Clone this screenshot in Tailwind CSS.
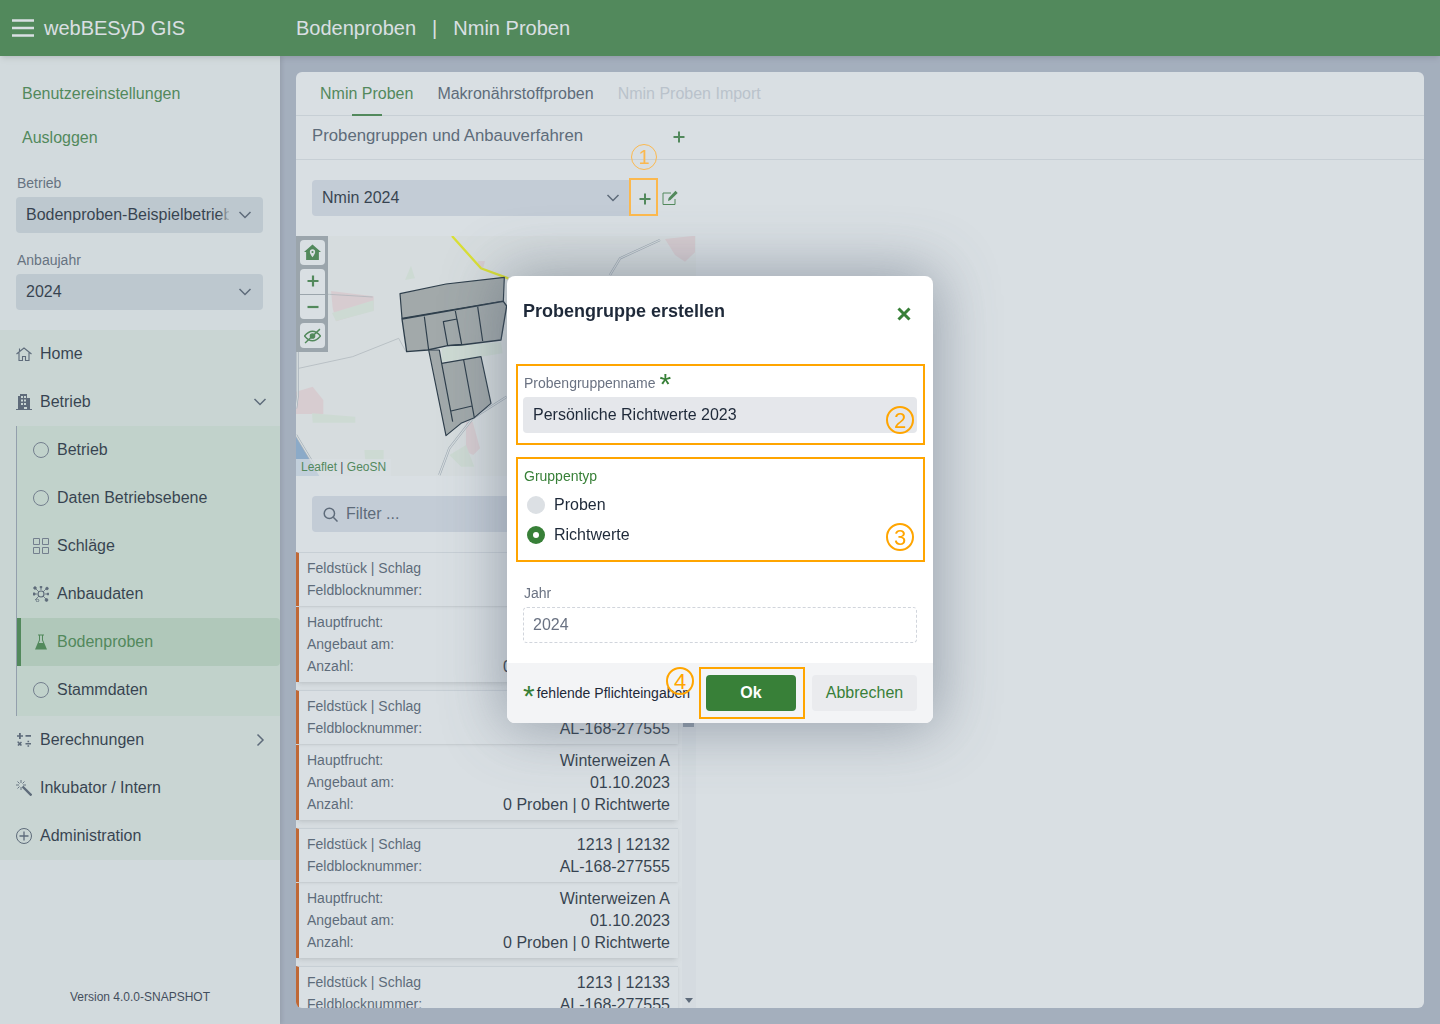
<!DOCTYPE html>
<html lang="de">
<head>
    <meta charset="UTF-8">
    <title>webBESyD GIS</title>
    <script src="https://cdn.jsdelivr.net/npm/@tailwindcss/browser@4"></script>
</head>
<body class="h-[1024px] w-[1440px] overflow-hidden bg-[#b2b8c8] font-['Liberation_Sans',sans-serif] text-gray-900">

    <!-- Kopfzeile -->
    <header class="relative z-[2] flex h-14 items-center bg-[#388038] text-xl text-white shadow-md">
        <div class="flex w-[296px] items-center pl-3">
            <svg class="mr-[10px] h-[22px] w-[22px]" viewBox="0 0 22 22" fill="none" stroke="currentColor" stroke-width="2.6"><path d="M0 3.5h22M0 11h22M0 18.5h22"/></svg>
            <span>webBESyD GIS</span>
        </div>
        <span>Bodenproben</span>
        <span class="mx-4">|</span>
        <span>Nmin Proben</span>
    </header>

    <div class="flex h-[968px]">
        <!-- Seitenleiste -->
        <aside class="relative z-[1] flex w-[280px] shrink-0 flex-col bg-[#f5f8f6] shadow-[2px_0_4px_rgba(0,0,0,0.12)]">
            <div class="px-[22px] pt-4 text-[#388038]">
                <a class="flex h-11 items-center">Benutzereinstellungen</a>
                <a class="flex h-11 items-center">Ausloggen</a>
            </div>
            <div class="px-4 pt-[13px]">
                <label class="block pl-px text-sm leading-[20px] text-[#56606e]">Betrieb</label>
                <div class="relative mt-1 flex h-9 w-[247px] items-center rounded-sm bg-[#d6dde2] pl-[10px]">
                    <span class="w-[203px] overflow-hidden whitespace-nowrap">Bodenproben-Beispielbetrieb</span>
                    <div class="absolute left-[203px] top-0 h-9 w-[12px] bg-gradient-to-r from-transparent to-[#d6dde2]"></div>
                    <svg class="absolute right-[11px] top-[13px] h-[10px] w-[14px] text-gray-600" viewBox="0 0 14 10" fill="none" stroke="currentColor" stroke-width="1.5"><path d="M1.5 2l5.5 5.5L12.5 2"/></svg>
                </div>
                <label class="mt-[17px] block pl-px text-sm leading-[20px] text-[#56606e]">Anbaujahr</label>
                <div class="relative mt-1 flex h-9 w-[247px] items-center rounded-sm bg-[#d6dde2] pl-[10px]">
                    <span>2024</span>
                    <svg class="absolute right-[11px] top-[13px] h-[10px] w-[14px] text-gray-600" viewBox="0 0 14 10" fill="none" stroke="currentColor" stroke-width="1.5"><path d="M1.5 2l5.5 5.5L12.5 2"/></svg>
                </div>
            </div>

            <nav class="mt-5 bg-[#e7f0e8]">
                <a class="flex h-12 items-center pl-4">
                    <svg class="mr-2 h-4 w-4 text-gray-600" viewBox="0 0 16 16" fill="none" stroke="currentColor" stroke-width="1.1"><path d="M.5 8L8 2l7.5 6M3 6.5V14.500h3.500v-4h3v4H13V6.5M3.5 2.5v2.500"/></svg>
                    Home
                </a>
                <a class="flex h-12 items-center pl-4">
                    <svg class="mr-2 h-4 w-4 text-gray-600" viewBox="0 0 16 16" fill="currentColor"><path d="M0 15h16v1H0zM2 2h2V0h7v4h3v11h-3v-2H8v2H2zM5 2v2h2V2zm3 0v2h2V2zM5 5.5v2h2v-2zm3 0v2h2v-2zM5 9v2h2V9zm3 0v2h2V9z" fill-rule="evenodd"/></svg>
                    Betrieb
                    <svg class="ml-auto mr-[13px] h-[10px] w-[14px] text-gray-600" viewBox="0 0 14 10" fill="none" stroke="currentColor" stroke-width="1.5"><path d="M1.5 2l5.5 5.5L12.5 2"/></svg>
                </a>
                <div class="ml-4 border-l border-gray-400 bg-[#dcecdc] pb-[2px]">
                    <a class="flex h-12 items-center pl-4">
                        <span class="mr-2 h-4 w-4 rounded-full border border-gray-500"></span>
                        Betrieb
                    </a>
                    <a class="flex h-12 items-center pl-4">
                        <span class="mr-2 h-4 w-4 rounded-full border border-gray-500"></span>
                        Daten Betriebsebene
                    </a>
                    <a class="flex h-12 items-center pl-4">
                        <svg class="mr-2 h-4 w-4 text-gray-500" viewBox="0 0 16 16" fill="none" stroke="currentColor"><path d="M.5.5h6v6h-6zM9.5.5h6v6h-6zM.5 9.5h6v6h-6zM9.5 9.5h6v6h-6z"/></svg>
                        Schläge
                    </a>
                    <a class="flex h-12 items-center pl-4">
                        <svg class="mr-2 h-4 w-4 text-gray-600" viewBox="0 0 16 16" fill="currentColor" stroke="currentColor" stroke-width=".8"><path d="M2 2l4 4M14 2l-4 4M2 14l4-4M14 14l-4-4M.5 8H4M12 8h3.5M8 .8V4"/><circle cx="8" cy="8" r="3" fill="none" stroke-width="1.2"/><circle cx="2" cy="2" r="1.3"/><circle cx="14" cy="2.5" r="1.3"/><circle cx="1" cy="8" r="1.2"/><circle cx="15" cy="8" r="1"/><circle cx="4.5" cy="14.500" r="1.3" fill="none"/><circle cx="13.5" cy="14" r="1.4"/><circle cx="8" cy="1" r="1"/></svg>
                        Anbaudaten
                    </a>
                    <a class="flex h-12 items-center rounded-r border-l-4 border-[#388038] bg-[#c3ddc3] pl-3 text-[#388038]">
                        <svg class="mr-2 h-4 w-4" viewBox="0 0 16 16" fill="currentColor"><path d="M5 .5h6v1H10v4.500l4 9.500H2l4-9.500V1.500H5zM7 1.500v4.700L5.800 9h4.400L9 6.200V1.500z" fill-rule="evenodd"/></svg>
                        Bodenproben
                    </a>
                    <a class="flex h-12 items-center pl-4">
                        <span class="mr-2 h-4 w-4 rounded-full border border-gray-500"></span>
                        Stammdaten
                    </a>
                </div>
                <a class="flex h-12 items-center pl-4">
                    <svg class="mr-2 h-4 w-4 text-gray-600" viewBox="0 0 16 16" fill="currentColor"><path d="M3 1h1.800v2.200H7v1.600H4.800V7H3V4.800H1V3.200h2zM9.500 3H15v1.800H9.500zM1.500 9.500l1.200 0 1 1.200 1.200-1.200 1.100 1.100-1.200 1.200 1.200 1.200-1.100 1.100-1.200-1.200-1.200 1.200-1.100-1.100 1.200-1.200-1.200-1.200zM9.500 11H15v1.500H9.500zM11.500 8.800h1.600v1.500h-1.600zM11.500 13.200h1.600v1.500h-1.600z"/></svg>
                    Berechnungen
                    <svg class="ml-auto mr-[15px] h-[14px] w-[10px] text-gray-600" viewBox="0 0 10 14" fill="none" stroke="currentColor" stroke-width="1.5"><path d="M2.5 1.5L8 7l-5.500 5.500"/></svg>
                </a>
                <a class="flex h-12 items-center pl-4">
                    <svg class="mr-2 h-4 w-4 text-gray-600" viewBox="0 0 16 16" fill="none" stroke="currentColor"><path d="M6.500 6.500l9 9" stroke-width="2.400"/><path d="M5 0v3M5 7v3M0 5h3M7 5h3M1.500 1.500l2 2M8.500 1.500l-2 2M1.500 8.500l2-2" stroke-width=".9"/></svg>
                    Inkubator / Intern
                </a>
                <a class="flex h-12 items-center pl-4">
                    <svg class="mr-2 h-4 w-4 text-gray-600" viewBox="0 0 16 16" fill="none" stroke="currentColor"><circle cx="8" cy="8" r="7.5"/><path d="M8 3.500v9M3.500 8h9" stroke-width="1.300"/></svg>
                    Administration
                </a>
            </nav>
            <p class="mt-auto pb-[19px] text-center text-xs text-gray-800">Version 4.0.0-SNAPSHOT</p>
        </aside>

        <!-- Inhalt -->
        <main class="min-w-0 flex-1 p-4">
            <div class="flex h-[936px] flex-col overflow-hidden rounded-md bg-white">
                <div class="flex h-11 shrink-0 gap-6 border-b border-gray-200 px-6">
                    <a class="relative leading-[43px] text-[#388038]">Nmin Proben<span class="absolute bottom-[-1px] left-8 h-[2px] w-[30px] bg-[#388038]"></span></a>
                    <a class="leading-[43px] text-gray-600">Makronährstoffproben</a>
                    <a class="leading-[43px] text-gray-300">Nmin Proben Import</a>
                </div>
                <div class="relative h-11 shrink-0 border-b border-gray-200 pl-4 text-[16.75px] leading-[39px] text-gray-600">
                    Probengruppen und Anbauverfahren
                    <svg class="absolute left-[377px] top-[15px] h-3 w-3 text-[#388038]" viewBox="0 0 12 12" stroke="currentColor" stroke-width="2"><path d="M6 .5v11M.5 6h11"/></svg>
                </div>

                <div class="flex min-h-0 w-[400px] flex-1 flex-col">
                    <div class="flex h-[76px] shrink-0 items-start px-4 pt-5">
                        <div class="relative flex h-9 w-[318px] items-center rounded-l-sm bg-[#dfe3ec] pl-[10px]">
                            Nmin 2024
                            <svg class="absolute right-[10px] top-[13px] h-[10px] w-[14px] text-gray-600" viewBox="0 0 14 10" fill="none" stroke="currentColor" stroke-width="1.5"><path d="M1.5 2l5.5 5.5L12.5 2"/></svg>
                        </div>
                        <div class="flex h-9 w-7 items-center justify-center pl-px pt-[2px] text-[#388038]">
                            <svg class="h-3 w-3" viewBox="0 0 12 12" stroke="currentColor" stroke-width="2"><path d="M6 .5v11M.5 6h11"/></svg>
                        </div>
                        <svg class="ml-1 mt-[10px] h-[16px] w-[16px] text-[#388038]" viewBox="0 0 16 16" fill="none" stroke="currentColor"><path d="M13 9v5.500H1V3h8"/><path d="M6 11l.6-3L13.500.8l2.200 2.200L8.500 10z" fill="currentColor" stroke="none"/></svg>
                    </div>

                    <!-- Karte -->
                    <div class="relative h-60 shrink-0 overflow-hidden bg-[#fbfbf8]">
                        <svg class="h-60 w-[400px]" viewBox="0 3 1200 720">
                            <path d="M0 605L70 723H0z" fill="#8db2d8"/>
                            <path d="M105 168l128 16v42l-113 33-10-40z" fill="#fce4e4"/>
                            <path d="M120 258l113-30v-32l-125 38z" fill="#eef8e8"/>
                            <path d="M345 92l12 38-30 5z" fill="#eef8e8"/>
                            <path d="M0 470l50-15 32 40v42l-62 0-20 0z" fill="#fce4e4"/>
                            <path d="M48 535l130 10v18H50z" fill="#eef8e8"/>
                            <path d="M205 645h58v35h-55z" fill="#eef8e8"/>
                            <path d="M510 560l20 0 22 80-20 20-22-10z" fill="#fce4e4"/>
                            <path d="M460 660l50-30 25 65-40 0z" fill="#eef8e8"/>
                            <path d="M437 340l58-10 120-8 5 33-65 10-118 15z" fill="#eef8e8"/>
                            <path d="M1107 12l90-10v50l-30 28-30-20z" fill="#fce4e4"/>
                            <path d="M545 78h22l-5 20-15-3z" fill="#fce4e4"/>
                            <path d="M8 400l162-35 138-55 22 40M100 178l130 8M0 180l100-2" fill="none" stroke="#b9bdc0" stroke-width="2"/>
                            <path d="M5 300v180l-5 40M430 720l30-80 70-90 102-65M942 120l30-50 120-55M0 600l60 100" fill="none" stroke="#aab2ba" stroke-width="7"/>
                            <path d="M5 300v180l-5 40M430 720l30-80 70-90 102-65M942 120l30-50 120-55M0 600l60 100" fill="none" stroke="#fbfbf8" stroke-width="3.500"/>
                            <path d="M468 3l87 97 82 30" fill="none" stroke="#ffff00" stroke-width="7"/>
                            <g fill="#aeb0ac" stroke="#041320" stroke-width="3.500" stroke-linejoin="round">
                                <path d="M312 176l138-29 175-20-3 71-304 52z"/>
                                <path d="M318 252l304-53 10 14-17 102-120 15-40 2-60 13-63 5z" stroke-width="4"/>
                                <path d="M398 345h32l7 40 118-20 30 140-50 43-40 17-45 37z"/>
                                <path d="M385 245l13 100M478 228l19 100M545 215l15 103M442 260l41-8 14 76-42 4zM437 385l33 175M503 375l32 173M465 528l63-15" fill="none"/>
                            </g>
                        </svg>
                        <div class="absolute left-0 top-0 flex h-[116px] w-8 flex-col items-start bg-[#a4aaae] pl-1 pt-1">
                            <button class="flex h-[25px] w-[25px] items-center justify-center rounded-sm bg-white text-[#388038]">
                                <svg class="h-[17px] w-[17px]" viewBox="0 0 16 16" fill="currentColor"><path d="M8 .5L16 7.500h-2V15H2V7.500H0zM8 5a2.500 2.500 0 0 0-2.500 2.500C5.500 9.300 8 12.500 8 12.500s2.500-3.200 2.500-5A2.500 2.500 0 0 0 8 5zm0 1.500a1 1 0 1 1 0 2 1 1 0 0 1 0-2z" fill-rule="evenodd"/></svg>
                            </button>
                            <button class="mt-1 flex h-[25px] w-[25px] items-center justify-center rounded-t-sm bg-white pb-px text-[#388038]">
                                <svg class="h-3 w-3" viewBox="0 0 12 12" stroke="currentColor" stroke-width="2.200"><path d="M6 .5v11M.5 6h11"/></svg>
                            </button>
                            <button class="mt-px flex h-[24px] w-[25px] items-center justify-center rounded-b-sm bg-white text-[#388038]">
                                <svg class="h-3 w-3" viewBox="0 0 12 12" stroke="currentColor" stroke-width="2.200"><path d="M.5 6h11"/></svg>
                            </button>
                            <button class="mt-1 flex h-[25px] w-[25px] items-center justify-center rounded-sm bg-white text-[#388038]">
                                <svg class="h-[17px] w-[17px]" viewBox="0 0 16 16" fill="none" stroke="currentColor" stroke-width="1.300"><path d="M.5 8.500C3 5.500 5.500 4 8 4s5 1.500 7.500 4.500c-2.500 3-5 4.500-7.500 4.500S3 11.500.5 8.500z"/><circle cx="8" cy="8.500" r="2" fill="currentColor"/><path d="M15 2L1 15"/></svg>
                            </button>
                        </div>
                        <div class="absolute bottom-0 left-0 bg-white/70 pl-[5px] pr-[5px] text-xs leading-[17px] text-gray-800"><a class="text-[#388038]">Leaflet</a> | <a class="text-[#388038]">GeoSN</a></div>
                    </div>

                    <div class="shrink-0 px-4 pt-5">
                        <div class="flex h-9 items-center rounded-sm bg-[#dfe3ec] pl-[11px] text-gray-600">
                            <svg class="mr-2 h-[15px] w-[15px]" viewBox="0 0 16 16" fill="none" stroke="currentColor" stroke-width="1.600"><circle cx="6.800" cy="6.800" r="5.500"/><path d="M11 11l4.500 4.500"/></svg>
                            Filter ...
                        </div>
                    </div>

                    <!-- Liste -->
                    <div class="mt-5 flex min-h-0 flex-1 overflow-hidden">
                        <div class="w-[382px] shrink-0 space-y-2 text-sm">
                            <div>
                                <div class="flex h-[54px] flex-col justify-center border-l-[3px] border-t border-gray-200 border-l-[#d95000] pl-2 pr-2 shadow-sm">
                                    <div class="flex h-[22px] items-center justify-between"><span class="mb-[2px] text-gray-600">Feldstück | Schlag</span><span class="text-base text-gray-900">1213 | 12130</span></div>
                                    <div class="flex h-[22px] items-center justify-between"><span class="mb-[2px] text-gray-600">Feldblocknummer:</span><span class="text-base text-gray-900">AL-168-277555</span></div>
                                </div>
                                <div class="mt-px flex h-[75px] flex-col justify-center border-l-[3px] border-l-[#d95000] pl-2 pr-2 shadow-md">
                                    <div class="flex h-[22px] items-center justify-between"><span class="mb-[2px] text-gray-600">Hauptfrucht:</span><span class="text-base text-gray-900">Winterweizen A</span></div>
                                    <div class="flex h-[22px] items-center justify-between"><span class="mb-[2px] text-gray-600">Angebaut am:</span><span class="text-base text-gray-900">01.10.2023</span></div>
                                    <div class="flex h-[22px] items-center justify-between"><span class="mb-[2px] text-gray-600">Anzahl:</span><span class="text-base text-gray-900">0 Proben | 0 Richtwerte</span></div>
                                </div>
                            </div>
                            <div>
                                <div class="flex h-[54px] flex-col justify-center border-l-[3px] border-t border-gray-200 border-l-[#d95000] pl-2 pr-2 shadow-sm">
                                    <div class="flex h-[22px] items-center justify-between"><span class="mb-[2px] text-gray-600">Feldstück | Schlag</span><span class="text-base text-gray-900">1213 | 12131</span></div>
                                    <div class="flex h-[22px] items-center justify-between"><span class="mb-[2px] text-gray-600">Feldblocknummer:</span><span class="text-base text-gray-900">AL-168-277555</span></div>
                                </div>
                                <div class="mt-px flex h-[75px] flex-col justify-center border-l-[3px] border-l-[#d95000] pl-2 pr-2 shadow-md">
                                    <div class="flex h-[22px] items-center justify-between"><span class="mb-[2px] text-gray-600">Hauptfrucht:</span><span class="text-base text-gray-900">Winterweizen A</span></div>
                                    <div class="flex h-[22px] items-center justify-between"><span class="mb-[2px] text-gray-600">Angebaut am:</span><span class="text-base text-gray-900">01.10.2023</span></div>
                                    <div class="flex h-[22px] items-center justify-between"><span class="mb-[2px] text-gray-600">Anzahl:</span><span class="text-base text-gray-900">0 Proben | 0 Richtwerte</span></div>
                                </div>
                            </div>
                            <div>
                                <div class="flex h-[54px] flex-col justify-center border-l-[3px] border-t border-gray-200 border-l-[#d95000] pl-2 pr-2 shadow-sm">
                                    <div class="flex h-[22px] items-center justify-between"><span class="mb-[2px] text-gray-600">Feldstück | Schlag</span><span class="text-base text-gray-900">1213 | 12132</span></div>
                                    <div class="flex h-[22px] items-center justify-between"><span class="mb-[2px] text-gray-600">Feldblocknummer:</span><span class="text-base text-gray-900">AL-168-277555</span></div>
                                </div>
                                <div class="mt-px flex h-[75px] flex-col justify-center border-l-[3px] border-l-[#d95000] pl-2 pr-2 shadow-md">
                                    <div class="flex h-[22px] items-center justify-between"><span class="mb-[2px] text-gray-600">Hauptfrucht:</span><span class="text-base text-gray-900">Winterweizen A</span></div>
                                    <div class="flex h-[22px] items-center justify-between"><span class="mb-[2px] text-gray-600">Angebaut am:</span><span class="text-base text-gray-900">01.10.2023</span></div>
                                    <div class="flex h-[22px] items-center justify-between"><span class="mb-[2px] text-gray-600">Anzahl:</span><span class="text-base text-gray-900">0 Proben | 0 Richtwerte</span></div>
                                </div>
                            </div>
                            <div>
                                <div class="flex h-[54px] flex-col justify-center border-l-[3px] border-t border-gray-200 border-l-[#d95000] pl-2 pr-2 shadow-sm">
                                    <div class="flex h-[22px] items-center justify-between"><span class="mb-[2px] text-gray-600">Feldstück | Schlag</span><span class="text-base text-gray-900">1213 | 12133</span></div>
                                    <div class="flex h-[22px] items-center justify-between"><span class="mb-[2px] text-gray-600">Feldblocknummer:</span><span class="text-base text-gray-900">AL-168-277555</span></div>
                                </div>
                            </div>
                        </div>
                        <!-- Scrollbalken -->
                        <div class="relative ml-1 w-[14px] bg-gray-50">
                            <div class="absolute left-px top-[170px] h-[5px] w-[11px] bg-gray-400"></div>
                            <svg class="absolute bottom-[5px] left-[3px] h-[5px] w-[8px] text-gray-600" viewBox="0 0 8 5" fill="currentColor"><path d="M0 0h8L4 5z"/></svg>
                        </div>
                    </div>
                </div>
            </div>
        </main>
    </div>

    <!-- Dialog -->
    <div class="fixed inset-0 z-10 flex justify-center bg-[#899ca9]/32 pt-[276px]">
        <!-- Markierung 1 -->
        <div class="absolute left-[629px] top-[178px] h-[38px] w-[29px] border-2 border-[#fbb84e]"></div>
        <div class="absolute left-[631px] top-[144px] flex h-[26px] w-[26px] items-center justify-center rounded-full border border-[#fbb84e] text-xl text-[#fbb84e]">1</div>

        <div class="h-[447px] w-[426px] rounded-lg bg-white shadow-[0_0_60px_5px_rgba(71,85,105,0.45)]">
            <div class="flex h-[88px] items-start justify-between px-4 pr-[22px] pt-6">
                <h2 class="text-lg font-bold leading-[22px] text-gray-800">Probengruppe erstellen</h2>
                <svg class="mt-[7px] h-[14px] w-[14px] text-[#388038]" viewBox="0 0 14 14" stroke="currentColor" stroke-width="3"><path d="M1.500 1.500l11 11M12.500 1.500l-11 11"/></svg>
            </div>

            <div class="relative ml-[9px] mr-[8px] h-[81px] border-2 border-[#ffa500] pl-[5px] pr-[6px] pt-[5px]">
                <label class="flex h-[23px] items-center pl-px text-sm text-gray-500">Probengruppenname<span class="ml-1 mt-[3px] text-[30px] leading-[20px] text-[#388038]">*</span></label>
                <div class="mt-[3px] flex h-9 items-center rounded-sm bg-gray-200 pl-[10px] text-gray-800">Persönliche Richtwerte 2023</div>
                <span class="absolute right-[9px] top-[40px] flex h-7 w-7 items-center justify-center rounded-full border-2 border-[#ffa500] text-[22px] text-[#ffa500]">2</span>
            </div>

            <div class="relative ml-[9px] mr-[8px] mt-3 h-[105px] border-2 border-[#ffa500] pl-[5px] pr-[6px] pt-2">
                <label class="block pl-px text-sm leading-[18px] text-[#388038]">Gruppentyp</label>
                <div class="mt-[5px] flex h-[30px] items-center pl-[4px] text-gray-800">
                    <span class="mr-[9px] h-[18px] w-[18px] rounded-full bg-[#dce0e4]"></span>
                    Proben
                </div>
                <div class="flex h-[30px] items-center pl-[4px] text-gray-800">
                    <span class="mr-[9px] flex h-[18px] w-[18px] items-center justify-center rounded-full bg-[#388038]"><span class="h-[6px] w-[6px] rounded-full bg-white"></span></span>
                    Richtwerte
                </div>
                <span class="absolute right-[9px] top-[64px] flex h-7 w-7 items-center justify-center rounded-full border-2 border-[#ffa500] text-[22px] text-[#ffa500]">3</span>
            </div>

            <div class="h-[101px] px-4 pt-[22px]">
                <label class="block pl-px text-sm leading-[18px] text-gray-500">Jahr</label>
                <div class="mt-[5px] flex h-9 items-center rounded-sm border border-dashed border-gray-300 pl-[9px] text-gray-500">2024</div>
            </div>

            <div class="relative flex h-[60px] items-center rounded-b-lg bg-gray-100 pl-4 pr-4">
                <span class="relative top-[3px] text-[30px] leading-[20px] text-[#388038]">*</span>
                <span class="ml-[2px] w-[154px] whitespace-nowrap text-sm text-gray-800">fehlende Pflichteingaben</span>
                <span class="absolute left-[159px] top-[4px] flex h-7 w-7 items-center justify-center rounded-full border-2 border-[#ffa500] text-[22px] text-[#ffa500]">4</span>
                <div class="ml-auto mr-[7px] flex h-[52px] w-[106px] items-center border-2 border-[#ffa500] pl-[5px]">
                    <button class="h-9 w-[90px] rounded-sm bg-[#388038] font-bold text-white">Ok</button>
                </div>
                <button class="h-9 w-[105px] rounded-sm bg-gray-200/70 text-[#388038]">Abbrechen</button>
            </div>
        </div>
    </div>
</body>
</html>
